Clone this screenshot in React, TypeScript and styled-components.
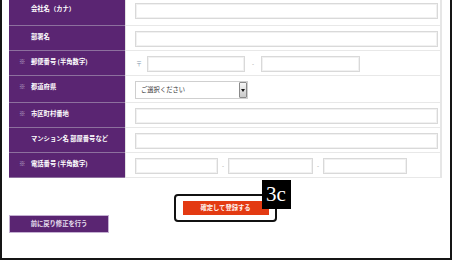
import React from 'react';
import styled, { createGlobalStyle } from 'styled-components';

const Global = createGlobalStyle`
  html, body { margin: 0; padding: 0; background: #fff; }
  body { font-family: "Noto Sans CJK JP", "Noto Sans", sans-serif; }
  * { box-sizing: border-box; }
`;

const PURPLE = '#5a2572';

const Frame = styled.div`
  width: 452px;
  height: 260px;
  border: 2px solid #151515;
  border-top: none;
  padding: 0 8px 0 7px;
  overflow: hidden;
`;

const Table = styled.div`
  width: 433px;
  margin-top: -2px;
  border-right: 2px solid #e6e6e6;
`;

const Row = styled.div<{ $h: number }>`
  display: grid;
  grid-template-columns: 116px 1fr;
  height: ${(p) => p.$h}px;
`;

const Label = styled.div`
  background: ${PURPLE};
  border-bottom: 1px solid #8d709e;
  display: flex;
  align-items: flex-start;
  padding: 7px 0 0 10px;
  color: #fff;
  font-weight: 700;
  font-size: 6.3px;
  line-height: 8px;
  white-space: nowrap;
`;

const Mark = styled.span<{ $show: boolean }>`
  width: 12px;
  flex: none;
  color: #b8a5c6;
  font-weight: 400;
  visibility: ${(p) => (p.$show ? 'visible' : 'hidden')};
`;

const Field = styled.div`
  border-left: 1px solid #e2e2e2;
  border-bottom: 1px solid #e8e8e8;
  padding: 5px 2px 0 9px;
  display: flex;
  align-items: flex-start;
`;

const Input = styled.div<{ $w?: number }>`
  height: 16px;
  ${(p) => (p.$w ? `width: ${p.$w}px; flex: none;` : 'flex: 1;')}
  border: 1px solid #d9d9d9;
  box-shadow: inset 0 0 0 1px #f1f1f1;
  background: #fff;
`;

const Sep = styled.span<{ $w: number }>`
  width: ${(p) => p.$w}px;
  flex: none;
  text-align: center;
  line-height: 16px;
  font-size: 6px;
  color: #999;
`;

const Zip = styled.span`
  width: 12px;
  flex: none;
  padding-left: 1px;
  line-height: 16px;
  font-size: 6px;
  color: #8797ad;
`;

const Select = styled.div`
  width: 113px;
  height: 18px;
  border: 1px solid #cfcfcf;
  background: #fff;
  display: flex;
  align-items: stretch;
  justify-content: space-between;
  padding-left: 5px;
  font-size: 6.3px;
  line-height: 16px;
  color: #333;
`;

const ArrowBox = styled.div`
  width: 8px;
  border: 1px solid #8a8a8a;
  border-radius: 1px;
  background: linear-gradient(#f6f6f6, #c9c9c9);
  display: flex;
  align-items: center;
  justify-content: center;
  &::after {
    content: '';
    border-left: 2px solid transparent;
    border-right: 2px solid transparent;
    border-top: 3px solid #111;
  }
`;

const SubmitRow = styled.div`
  width: 433px;
  display: flex;
  justify-content: center;
  padding-top: 23px;
`;

const Anchor = styled.div`
  position: relative;
  display: flex;
`;

const Submit = styled.div`
  width: 86px;
  height: 14px;
  background: #e33a12;
  color: #fff3ee;
  font-size: 6.3px;
  font-weight: 700;
  line-height: 14px;
  text-align: center;
`;

const Outline = styled.div`
  position: absolute;
  top: -7px;
  left: -9px;
  right: -8px;
  bottom: -7px;
  border: 2px solid #111;
  border-radius: 4px;
`;

const Badge = styled.div`
  position: absolute;
  left: 79px;
  top: -21px;
  width: 29px;
  height: 29px;
  background: #000;
  color: #fff;
  font-family: "Liberation Serif", serif;
  font-size: 21px;
  line-height: 29px;
  text-align: center;
`;

const Back = styled.div`
  width: 100px;
  height: 18px;
  background: ${PURPLE};
  border: 1px solid #c4b0d2;
  color: #e9e0f0;
  font-size: 6.3px;
  font-weight: 700;
  line-height: 16px;
  text-align: center;
`;

type RowDef = { label: string; req: boolean; h: number; kind: 'text' | 'zip' | 'pref' | 'tel' };

const rows: RowDef[] = [
  { label: '会社名（カナ）', req: false, h: 28, kind: 'text' },
  { label: '部署名', req: false, h: 25, kind: 'text' },
  { label: '郵便番号 (半角数字)', req: true, h: 25, kind: 'zip' },
  { label: '都道府県', req: true, h: 27, kind: 'pref' },
  { label: '市区町村番地', req: true, h: 25, kind: 'text' },
  { label: 'マンション名 部屋番号など', req: false, h: 25, kind: 'text' },
  { label: '電話番号 (半角数字)', req: true, h: 25, kind: 'tel' },
];

function FieldBody({ kind }: { kind: RowDef['kind'] }) {
  if (kind === 'zip')
    return (
      <>
        <Zip>〒</Zip>
        <Input $w={98} />
        <Sep $w={16}>-</Sep>
        <Input $w={99} />
      </>
    );
  if (kind === 'pref')
    return (
      <Select>
        <span>ご選択ください</span>
        <ArrowBox />
      </Select>
    );
  if (kind === 'tel')
    return (
      <>
        <Input $w={83} />
        <Sep $w={10}>-</Sep>
        <Input $w={85} />
        <Sep $w={10}>-</Sep>
        <Input $w={84} />
      </>
    );
  return <Input />;
}

export default function App() {
  return (
    <>
      <Global />
      <Frame>
        <Table>
          {rows.map((r) => (
            <Row key={r.label} $h={r.h}>
              <Label>
                <Mark $show={r.req}>※</Mark>
                {r.label}
              </Label>
              <Field>
                <FieldBody kind={r.kind} />
              </Field>
            </Row>
          ))}
        </Table>
        <SubmitRow>
          <Anchor>
            <Submit>確定して登録する</Submit>
            <Outline />
            <Badge>3c</Badge>
          </Anchor>
        </SubmitRow>
        <Back>前に戻り修正を行う</Back>
      </Frame>
    </>
  );
}
